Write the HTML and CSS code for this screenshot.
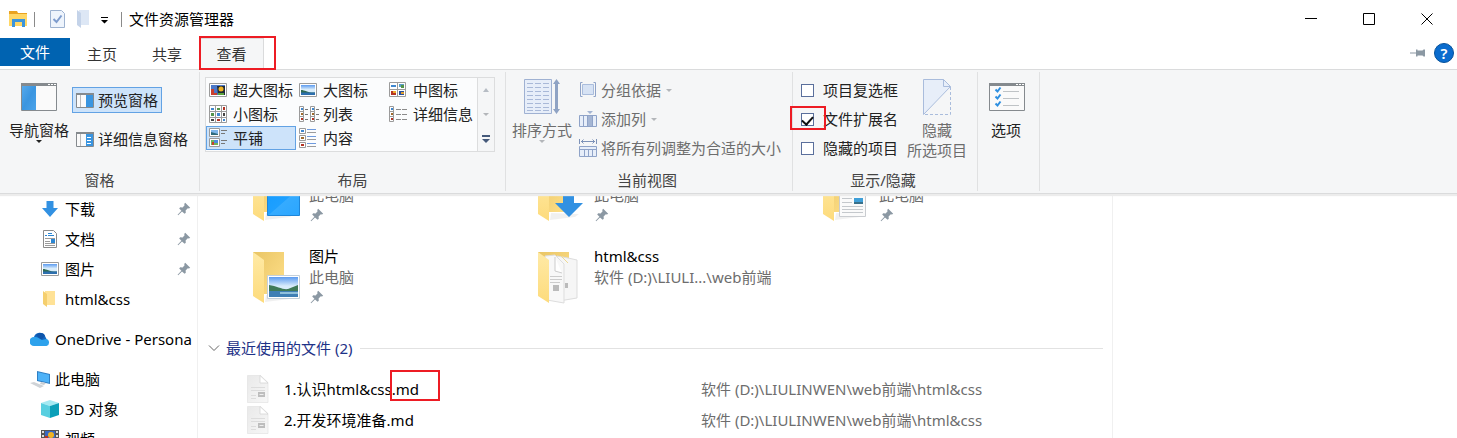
FILE: index.html
```html
<!DOCTYPE html>
<html lang="zh-CN">
<head>
<meta charset="utf-8">
<title>文件资源管理器</title>
<link rel="stylesheet" href="styles.css">
</head>
<body>
<svg class="defs" aria-hidden="true">
  <defs>
    <linearGradient id="gBlue" x1="0" y1="0" x2="1" y2="1"><stop offset="0" stop-color="#55a9ec"/><stop offset=".5" stop-color="#3a95e0"/><stop offset="1" stop-color="#4aa3ea"/></linearGradient>
    <linearGradient id="gBack" x1="0" y1="0" x2="1" y2="1"><stop offset="0" stop-color="#e9c565"/><stop offset="1" stop-color="#ffe08a"/></linearGradient>
    <linearGradient id="gFlap" x1="0" y1="0" x2="0" y2="1"><stop offset="0" stop-color="#ffeaa6"/><stop offset="1" stop-color="#fddb7c"/></linearGradient>
    <linearGradient id="gSky" x1="0" y1="0" x2="0" y2="1"><stop offset="0" stop-color="#5c9bf0"/><stop offset=".45" stop-color="#d8ecfb"/></linearGradient>
    <linearGradient id="gScreen" x1="0" y1="0" x2="1" y2="1"><stop offset="0" stop-color="#149bff"/><stop offset=".5" stop-color="#1ea0ff"/><stop offset=".52" stop-color="#35abff"/><stop offset="1" stop-color="#2ba6ff"/></linearGradient>
    <linearGradient id="gDoc" x1="0" y1="0" x2="1" y2="1"><stop offset="0" stop-color="#e9e9e9"/><stop offset="1" stop-color="#f7f7f7"/></linearGradient>
  </defs>
  <symbol id="pin" viewBox="0 0 14 14"><path fill="#8b98a3" d="M8.2.8 13.2 5.800 12 6.600 10.800 6.300 8.600 8.600 8.800 10.800 7.600 11.800 5 9.400 1.200 13.200.6 12.800 4.400 8.800 2.200 6.400 3.200 5.200 5.600 5.400 7.600 3.200 7.200 2z"/></symbol>
  <symbol id="folder" viewBox="0 0 50 54"><path fill="#000" opacity=".06" d="M14 44 42 45 38 48 13 51z"/><path fill="url(#gBack)" d="M1 1h31v42H1z"/><path fill="url(#gFlap)" d="M1 1 12 9v43L1 45z"/></symbol>
  <symbol id="photo" viewBox="0 0 18 14"><path fill="#fff" stroke="#9b9b9b" d="M.5.500h17v13H.5z"/><path fill="url(#gSky)" d="M2 2h14v10H2z"/><path fill="#2f6b54" d="M2 7c4 0 7 3 14 2.500V10H2z"/><path fill="#2d6fae" d="M2 9.500h14V12H2z"/></symbol>
  <symbol id="file" viewBox="0 0 22 28"><path fill="url(#gDoc)" stroke="#e2e2e2" stroke-width=".7" d="M.5.500h13l7.500 7v20H.5z"/><path fill="#fff" stroke="#d4d4d4" stroke-width=".8" d="M13 .5v7.500h8z"/><path stroke="#dcdcdc" d="M4 12.500h14M4 15.500h14M4 20.500h5M4 23.500h5"/><path fill="#bdbdbd" d="M11 17h7v5h-7z"/><path stroke="#eee" d="M12.500 19.500h4"/></symbol>
  <symbol id="arrow" viewBox="0 0 6 3"><path fill="currentColor" d="M0 0h6L3 3z"/></symbol>
</svg>

<header class="titlebar">
  <div class="quick">
    <svg width="19" height="18" viewBox="0 0 19 18"><path fill="#e9a320" d="M0 1h8l1 2h9v5H0z"/><path fill="#ffd766" d="M0 4h18v12H0z"/><path fill="#3c95dc" d="M3 9h13v8h-3v-5H6v5H3z"/></svg>
    <i class="bar"></i>
    <button class="plain" aria-label="属性"><svg width="15" height="18" viewBox="0 0 15 18"><path fill="#eef4fc" stroke="#9db2d0" d="M.5.500h11l3 3v14H.5z"/><path fill="none" stroke="#7e9ccd" stroke-width="2" d="M3.500 9 6.500 12 11.500 5.500"/></svg></button>
    <button class="plain" aria-label="新建文件夹"><svg width="14" height="18" viewBox="0 0 14 18"><path fill="#dde7f5" d="M2 0h10v15H2z"/><path fill="#c4d3e9" d="M0 0 4 3v15l-4-3z"/></svg></button>
    <button class="plain more" aria-label="自定义快速访问工具栏"><svg width="7" height="7" viewBox="0 0 7 7"><path d="M0 0h7v1H0zM0 3h7L3.500 6.500z"/></svg></button>
    <i class="bar"></i>
  </div>
  <h1>文件资源管理器</h1>
  <div class="controls">
    <button aria-label="最小化"><svg width="12" height="12"><path stroke="#000" d="M0 5.500h12"/></svg></button>
    <button aria-label="最大化"><svg width="12" height="12"><path fill="none" stroke="#000" d="M.5.500h11v11H.5z"/></svg></button>
    <button aria-label="关闭"><svg width="12" height="12"><path stroke="#000" d="M.5.500 11.500 11.500M11.500.500.500 11.500"/></svg></button>
  </div>
</header>

<nav class="tabs">
  <button class="tab file">文件</button>
  <button class="tab home">主页</button>
  <button class="tab share">共享</button>
  <div class="anchor"><button class="tab view">查看</button><div class="mark mark-tab"></div></div>
  <div class="tab-tools">
    <button class="plain" aria-label="固定功能区"><svg width="16" height="10" viewBox="0 0 16 10"><path fill="#8b98a3" d="M0 4.500h6V1.500h1.500v1h5l1-1H15v7h-1.500l-1-1h-5v1H6v-3H0z"/></svg></button>
    <button class="help" aria-label="帮助">?</button>
  </div>
</nav>

<section class="ribbon">
  <div class="group g-panes">
    <div class="tools">
      <button class="big"><svg width="36" height="28" viewBox="0 0 36 28"><path fill="#fafafa" stroke="#858a8e" d="M.5.500h35v27H.5z"/><path fill="#858a8e" d="M0 0h36v3H0z"/><path fill="#fff" d="M27 1h2v1h-2zM30 1h2v1h-2zM33 1h2v1h-2z"/><path fill="url(#gBlue)" d="M1 3h14v24H1z"/></svg><span>导航窗格</span><svg class="dd" width="6" height="3"><use href="#arrow"/></svg></button>
      <div class="stack two">
        <button class="small on"><svg width="18" height="15" viewBox="0 0 18 15"><path fill="#fafafa" stroke="#858a8e" d="M.5.500h17v14H.5z"/><path fill="#858a8e" d="M0 0h18v2H0z"/><path stroke="#bbb" d="M4.500 2v12"/><path fill="#3a95e0" d="M10 2h7v12h-7z"/></svg>预览窗格</button>
        <button class="small"><svg width="18" height="15" viewBox="0 0 18 15"><path fill="#fafafa" stroke="#858a8e" d="M.5.500h17v14H.5z"/><path fill="#858a8e" d="M0 0h18v2H0z"/><path stroke="#bbb" d="M4.500 2v12"/><path fill="#3a95e0" d="M10 2h7v12h-7z"/><path stroke="#fff" d="M11 5.500h4M11 8.500h4M11 11.500h4"/></svg>详细信息窗格</button>
      </div>
    </div>
    <h2>窗格</h2>
  </div>

  <div class="group g-layout">
    <div class="tools">
      <div class="gallery">
        <div class="cells">
          <button class="cell"><svg width="18" height="14" viewBox="0 0 18 14"><path fill="#fff" stroke="#9b9b9b" d="M.5.500h17v13H.5z"/><path fill="#4b78c8" d="M2 2h14v10H2z"/><path fill="#c83f2e" d="M2 6h3v4h3v2H2z"/><path fill="#1f2a36" d="M8 3h8v9H9z"/><circle cx="12" cy="6" r="2.500" fill="#f0b323"/><path fill="#59a33a" d="M9 10h6v2H9z"/></svg>超大图标</button>
          <button class="cell"><svg width="18" height="14"><use href="#photo"/></svg>大图标</button>
          <button class="cell"><svg width="18" height="16" viewBox="0 0 18 16"><path fill="#fff" stroke="#9b9b9b" d="M.5.500h16v14H.5zM8.500.500v14M.500 7.500h16"/><path fill="#3f87cf" d="M2 3h5v2H2z"/><path fill="#5d9fc7" d="M10 2h5v3h-5z"/><path fill="#53944a" d="M12 3h3v3h-3z"/><path fill="#b43324" d="M2 9h5v4H2z"/><path fill="#efae2f" d="M4 9h3v2H4z"/><path fill="#2a4f9c" d="M10 9h5v4h-5z"/><path fill="#e0a02e" d="M12 10h3v2h-3z"/></svg>中图标</button>
          <button class="cell"><svg width="18" height="18" viewBox="0 0 18 18"><path fill="#fff" stroke="#9b9b9b" d="M.5.500h17v17H.5zM6.500.500v17M12.500.500v17M.500 6.500h17M.500 12.500h17"/><path fill="#3f87cf" d="M2 3h3v2H2zM8 8h3v3H8zM14 14h2v2h-2z"/><path fill="#53944a" d="M8 3h3v2H8zM2 8h3v3H2z"/><path fill="#b43324" d="M14 2h2v3h-2zM8 14h3v2H8z"/><path fill="#444" d="M14 8h2v3h-2zM2 14h3v2H2z"/></svg>小图标</button>
          <button class="cell"><svg width="20" height="16" viewBox="0 0 20 16"><path fill="#fff" stroke="#9b9b9b" d="M.5.500h4v15h-4zM11.500.500h4v15h-4zM.500 5.500h4M.500 10.500h4M11.500 5.500h4M11.500 10.500h4"/><path stroke="#777" d="M6 3.500h3M6 8.500h3M6 13.500h3M17 3.500h3M17 8.500h3M17 13.500h3"/><path fill="#3f87cf" d="M2 2h2v2H2zM13 2h2v2h-2z"/><path fill="#a06a2a" d="M2 7h2v2H2zM13 7h2v2h-2z"/><path fill="#b43324" d="M2 12h2v2H2zM13 12h2v2h-2z"/></svg>列表</button>
          <button class="cell"><svg width="18" height="16" viewBox="0 0 18 16"><path fill="#fff" stroke="#9b9b9b" d="M.5.500h4v15h-4zM.500 5.500h4M.500 10.500h4"/><path stroke="#8b8b8b" d="M7 3.500h5M13 3.500h5M7 8.500h5M13 8.500h5M7 13.500h5M13 13.500h5"/><path fill="#3f87cf" d="M2 2h2v2H2z"/><path fill="#a06a2a" d="M2 7h2v2H2z"/><path fill="#b43324" d="M2 12h2v2H2z"/></svg>详细信息</button>
          <button class="cell on"><svg width="18" height="20" viewBox="0 0 18 20"><path fill="#fff" stroke="#9b9b9b" d="M.5.500h10v8H.5zM.500 10.500h10v8H.5z"/><path fill="#7fb6ea" d="M2 2h7v5H2z"/><path fill="#2f6b7c" d="M2 4l7 2v1H2z"/><path fill="#6fb35a" d="M2 12h7v5H2z"/><path fill="#4c8ce0" d="M5 12h4v3H5z"/><path fill="#c83f2e" d="M3 14h2v3H3z"/><path stroke="#777" d="M12 2.500h6M12 5.500h4M12 12.500h6M12 15.500h4"/></svg>平铺</button>
          <button class="cell"><svg width="18" height="20" viewBox="0 0 18 20"><path fill="#fff" stroke="#9b9b9b" d="M.5.500h6v5h-6zM.500 7.500h6v5h-6zM.500 14.500h6v5h-6z"/><path stroke="#6e9ade" d="M8 1.500h9M8 8.500h9M8 15.500h9"/><path stroke="#9b9b9b" d="M8 4.500h9M8 11.500h9M8 18.500h9"/><path fill="#3f87cf" d="M2 2h3v2H2z"/><path fill="#a06a2a" d="M2 9h3v2H2z"/><path fill="#b43324" d="M2 16h3v2H2z"/></svg>内容</button>
        </div>
        <div class="scroller">
          <button aria-label="上一行"><svg width="6" height="4"><path fill="#b6bcc4" d="M0 4h6L3 0z"/></svg></button>
          <button aria-label="下一行"><svg width="6" height="3" class="pale"><use href="#arrow"/></svg></button>
          <button aria-label="更多"><svg width="8" height="8"><path fill="#44597a" d="M0 0h8v2H0zM0 4h8L4 8z"/></svg></button>
        </div>
      </div>
    </div>
    <h2>布局</h2>
  </div>

  <div class="group g-view">
    <div class="tools">
      <button class="big dim tall"><svg width="36" height="36" viewBox="0 0 36 36"><path fill="#e7eef9" stroke="#9fb1d2" d="M.5.500h27v34H.5z"/><path stroke="#a9b9d8" stroke-dasharray="6 2" d="M3 4.500h22M3 8.500h22M3 12.500h22M3 16.500h22M3 20.500h22M3 24.500h22M3 28.500h22M3 31.500h22"/><path fill="#8fa3c4" d="M32.500 0 36 5h-2v25h2l-3.500 5L29 30h2V5h-2z"/></svg><span>排序方式</span><svg class="dd" width="6" height="3"><use href="#arrow"/></svg></button>
      <div class="stack three">
        <button class="small dim"><svg width="18" height="18" viewBox="0 0 18 18"><path fill="none" stroke="#8fa3c8" d="M3.500 1.500h-2v14h2M14.500 1.500h2v14h-2"/><path fill="#d6e2f4" stroke="#a9bcdc" d="M3.500 3.500h11v10h-11z"/></svg>分组依据<svg width="6" height="3" class="pale"><use href="#arrow"/></svg></button>
        <button class="small dim"><svg width="18" height="18" viewBox="0 0 18 18"><path fill="#e7eef9" stroke="#8fa3c8" d="M.5 5.500h17v11H.5zM4.500 5.500v11M8.500 5.500v11M13.500 5.500v11"/><path fill="#a4b5d3" d="M9 6h4v10H9zM8 1h6l-3 3z"/></svg>添加列<svg width="6" height="3" class="pale"><use href="#arrow"/></svg></button>
        <button class="small dim"><svg width="18" height="18" viewBox="0 0 18 18"><path fill="#e7eef9" stroke="#8fa3c8" d="M.5 7.500h17v10H.5zM.500 10.500h17M5.500 10.500v7M9.500 10.500v7M13.500 10.500v7"/><path fill="none" stroke="#7d92b8" d="M.5 0v5M17.500 0v5M2 2.500h14M4.500.500 2.500 2.500 4.500 4.500M13.500.500 15.500 2.500 13.500 4.500"/></svg>将所有列调整为合适的大小</button>
      </div>
    </div>
    <h2>当前视图</h2>
  </div>

  <div class="group g-show">
    <div class="tools">
      <div class="checks">
        <label><input type="checkbox">项目复选框</label>
        <label class="anchor"><input type="checkbox" checked>文件扩展名<span class="mark mark-check"></span></label>
        <label><input type="checkbox">隐藏的项目</label>
      </div>
      <button class="big dim tall"><svg width="28" height="36" viewBox="0 0 28 36"><path fill="#e7eef9" d="M.5.500h20l7 7L.5 35z"/><path fill="none" stroke="#a9bcdc" d="M.5 35.500V.500h20l7 7L.5 35.500M20.500.500v7h7"/><path fill="none" stroke="#a9bcdc" stroke-dasharray="3 2" d="M27.500 8v27.500H1"/></svg><span>隐藏<br>所选项目</span></button>
    </div>
    <h2>显示/隐藏</h2>
  </div>

  <div class="group g-options">
    <div class="tools">
      <button class="big"><svg width="36" height="28" viewBox="0 0 36 28"><path fill="#fafafa" stroke="#858a8e" d="M.5.500h35v27H.5z"/><path fill="#858a8e" d="M0 0h36v3H0z"/><path fill="#fff" d="M27 1h2v1h-2zM30 1h2v1h-2zM33 1h2v1h-2z"/><path fill="none" stroke="#2e8fe0" stroke-width="2" d="M6.500 6.500 8.500 8.500 11.500 4.500M6.500 13.500 8.500 15.500 11.500 11.500M6.500 20.500 8.500 22.500 11.500 18.500"/><path stroke="#bfc3c6" d="M14 8.500h16M14 15.500h16M14 22.500h16"/></svg><span>选项</span></button>
    </div>
  </div>
</section>

<div class="body">
  <aside class="sidebar">
    <a href="#downloads" class="node sub"><svg width="18" height="18" viewBox="0 0 18 18"><path fill="#3291e2" d="M5.500 1h7v7H17L9 17 1 8h4.500z"/></svg><span>下载</span><svg class="pin" width="14" height="14"><use href="#pin"/></svg></a>
    <a href="#documents" class="node sub"><svg width="18" height="18" viewBox="0 0 18 18"><path fill="#fff" stroke="#8b8b8b" d="M2.500.500h10l3 3v14h-13z"/><path stroke="#2b86d3" d="M4 5.500h2M7 3.500h4M7 5.500h6"/><path stroke="#9b9b9b" d="M4 8.500h10M4 11.500h5M4 13.500h10M4 15.500h10"/><path fill="#2b86d3" d="M10 9h4v4h-4z"/></svg><span>文档</span><svg class="pin" width="14" height="14"><use href="#pin"/></svg></a>
    <a href="#pictures" class="node sub"><svg width="18" height="14"><use href="#photo"/></svg><span>图片</span><svg class="pin" width="14" height="14"><use href="#pin"/></svg></a>
    <a href="#html" class="node sub"><svg width="18" height="18" viewBox="0 0 18 18"><path fill="#ffe296" d="M4 1h10v14H4z"/><path fill="#f5cf6e" d="M2 1 6 4v13l-4-3z"/></svg><span>html&amp;css</span></a>
    <a href="#onedrive" class="node top"><svg width="20" height="14" viewBox="0 0 20 14"><path fill="#1267c1" d="M4 5a6 6 0 0 1 11-1l2 4-6 3-8-3z"/><path fill="#0f55ab" d="M6 3a6 6 0 0 1 8-1l1 2-4 4z"/><path fill="#2da2ec" d="M4 14A4.500 4.500 0 0 1 4 5c3-.5 5 1 8 3l4-1a3.600 3.600 0 0 1 .5 7z"/></svg><span>OneDrive - Persona</span></a>
    <a href="#pc" class="node top"><svg width="20" height="18" viewBox="0 0 20 18"><path fill="#2f7fc4" d="M7 1 20 4v10L7 11z"/><path fill="#4db2f8" d="M8 2.300 19 4.800v7.900L8 10.200z"/><path fill="#c9ced3" d="M11 12 16 13 14 15 10 14z"/><path fill="#cfd3d7" d="M0 13 4 12l10 4-4 2z"/></svg><span>此电脑</span></a>
    <a href="#objects" class="node sub"><svg width="18" height="18" viewBox="0 0 18 18"><path fill="#a4e9f2" d="M9 0 18 3 9 6 0 3z"/><path fill="#58cfe0" d="M0 3 9 6v12l-9-3z"/><path fill="#0a9fb8" d="M18 3 9 6v12l9-3z"/></svg><span>3D 对象</span></a>
    <a href="#videos" class="node sub"><svg width="18" height="18" viewBox="0 0 18 18"><path fill="#555" d="M0 0h18v18H0z"/><path stroke="#ddd" stroke-width="2" stroke-dasharray="2 2" d="M2 1v17M16 1v17"/><path fill="#3769c4" d="M4 1h10v16H4z"/><circle cx="10" cy="5" r="3" fill="#f0b323"/><path fill="#b43324" d="M4 6h3v4H4z"/><path fill="#53944a" d="M7 8h6v6H7z"/></svg><span>视频</span></a>
  </aside>

  <main class="content">
    <div class="tiles">
      <a href="#desktop" class="tile partial"><svg width="50" height="54"><use href="#folder"/><path fill="url(#gScreen)" stroke="#1d86da" d="M15.500 18.500h32v28h-32z"/></svg><span class="info"><span>此电脑</span><svg width="14" height="14"><use href="#pin"/></svg></span></a>
      <a href="#downloads" class="tile partial"><svg width="50" height="54"><use href="#folder"/><path fill="#3291e2" d="M26 16h11v18h9L32 48 18 34h8z"/></svg><span class="info"><span>此电脑</span><svg width="14" height="14"><use href="#pin"/></svg></span></a>
      <a href="#documents" class="tile partial"><svg width="50" height="54"><use href="#folder"/><path fill="#fafafa" stroke="#c9ccd0" d="M17.500 16.500h26v31h-26z"/><path stroke="#58a8dc" d="M20 26.500h21"/><path stroke="#c4c8cc" d="M20 29.500h10M20 33.500h10M20 37.500h21M20 40.500h21M20 43.500h21"/><path fill="#3f9fd8" d="M32 29h9v6h-9z"/><path fill="#38708a" d="M32 33h9v2h-9z"/></svg><span class="info"><span>此电脑</span><svg width="14" height="14"><use href="#pin"/></svg></span></a>
      <a href="#pictures" class="tile"><svg width="50" height="54"><use href="#folder"/><path fill="#fff" stroke="#c4d0da" d="M15.500 24.500h32v23h-32z"/><path fill="url(#gSky)" d="M17 26h29v20H17z"/><path fill="#3f7a58" d="M17 34c8 1 14 5 19 4l10-4v6H17z"/><path fill="#3f7fb4" d="M17 40h29v6H17z"/><path fill="#8fc0dc" d="M28 41h18v2H28z"/></svg><span class="info"><b>图片</b><span>此电脑</span><svg width="14" height="14"><use href="#pin"/></svg></span></a>
      <a href="#html" class="tile"><svg width="50" height="54"><path fill="url(#gBack)" d="M1 1h31v40H1z"/><path fill="#f6f6f6" stroke="#ddd" d="M20 5 31 7 40 9v38l-18 3z"/><path fill="none" stroke="#eed991" d="M24 5 31 12"/><path fill="#f8f8f8" stroke="#ddd" d="M8 5 18 4 27 13v39L10 49z"/><path fill="#fff" stroke="#ccc" d="M18 6v14l7 2"/><path stroke="#ccc" d="M13 25.500h12M13 28.500h12M13 31.500h10"/><path fill="#bbb" d="M16 34h6v6h-6zM28 32h3v5h-3z"/><path fill="url(#gFlap)" d="M1 1 12 9v43L1 45z"/></svg><span class="info"><b>html&amp;css</b><span>软件 (D:)\LIULI...\web前端</span></span></a>
    </div>
    <div class="section">
      <svg width="12" height="8"><path fill="none" stroke="#666" d="M1 1.500 6 6.500 11 1.500"/></svg>
      <h3>最近使用的文件 (2)</h3>
      <i class="rule"></i>
    </div>
    <div class="files">
      <div class="row"><svg width="22" height="28"><use href="#file"/></svg><div class="anchor name"><a href="#f1">1.认识html&amp;css.md</a><div class="mark mark-ext"></div></div><span class="path">软件 (D:)\LIULINWEN\web前端\html&amp;css</span></div>
      <div class="row"><svg width="22" height="28"><use href="#file"/></svg><div class="name"><a href="#f2">2.开发环境准备.md</a></div><span class="path">软件 (D:)\LIULINWEN\web前端\html&amp;css</span></div>
    </div>
  </main>
</div>
</body>
</html>
```
FILE: styles.css
```css
* { box-sizing: border-box; }

body {
  margin: 0;
  height: 100vh;
  display: flex;
  flex-direction: column;
  overflow: hidden;
  background: #fff;
  color: #000;
  font: 15px/20px "Noto Sans", "Noto Sans CJK SC", sans-serif;
}

h1, h2, h3 { margin: 0; font-size: 15px; font-weight: 400; }
a { color: inherit; text-decoration: none; }
svg { display: block; flex: none; }
.defs { position: absolute; width: 0; height: 0; }

button {
  padding: 0;
  border: 0;
  background: none;
  color: inherit;
  font: inherit;
  white-space: nowrap;
}

.anchor { position: relative; }
.mark { position: absolute; border: 2px solid #ed1c24; pointer-events: none; z-index: 2; }
.mark-tab { left: -1px; top: -2px; width: 77px; height: 34px; }
.mark-check { left: -11px; top: -3px; width: 36px; height: 24px; }
.mark-ext { left: 106px; top: -9px; width: 50px; height: 31px; }

/* Title bar */
.titlebar { display: flex; align-items: center; height: 38px; flex: none; }
.quick { display: flex; align-items: center; padding-left: 9px; gap: 12px; }
.quick .bar { width: 1px; height: 15px; background: #8a8a8a; margin: 0 3px 0 -6px; }
.quick .more { padding: 3px 0 0; margin: 0 7px 0 -2px; }
.titlebar h1 { margin-left: 7px; }
.quick .bar:last-child { margin-right: 0; }
.controls { display: flex; margin-left: auto; padding-right: 1px; }
.controls button { display: flex; justify-content: center; align-items: center; width: 58px; height: 38px; }

/* Tabs */
.tabs { display: flex; height: 31px; flex: none; }
.tab { height: 31px; color: #333; }
.tab.file { width: 70px; height: 28px; background: #0063b1; color: #fff; }
.tab.home { width: 64px; }
.tab.share { width: 66px; }
.tab.view { width: 64px; background: #f5f6f7; border: solid #dadbdc; border-width: 1px 1px 0 0; }
.tab-tools { display: flex; align-items: center; gap: 8px; margin-left: auto; padding: 0 3px 2px 0; }
.help {
  width: 20px;
  height: 20px;
  border: 1px solid #07529b;
  border-radius: 50%;
  background: #0a6cce;
  color: #fff;
  font-weight: 600;
  line-height: 18px;
}

/* Ribbon */
.ribbon {
  display: flex;
  flex: none;
  padding: 2px 0;
  background: #f5f6f7;
  border: solid #dadbdc;
  border-width: 1px 0;
  box-shadow: 0 2px 1px #ececec;
  color: #222;
  position: relative;
  z-index: 1;
}
.group { display: flex; flex-direction: column; height: 119px; border-right: 1px solid #e0e1e2; }
.group h2 { margin-top: auto; padding: 0 4px 1px 0; text-align: center; color: #444; }
.tools { display: flex; height: 95px; }
.g-panes { width: 200px; }
.g-panes h2, .g-layout h2 { padding-right: 0; }
.g-layout { width: 306px; }
.g-view { width: 287px; }
.g-show { width: 185px; }
.g-options { width: 62px; }
.g-panes .tools { padding-left: 9px; }
.g-layout .tools { padding-left: 5px; }
.g-view .tools { padding-left: 6px; }
.g-show .tools { padding-left: 8px; }
.g-options .tools { padding-left: 11px; }

.big { display: flex; flex-direction: column; align-items: center; align-self: flex-start; width: 60px; padding-top: 11px; }
.big span { margin-top: 9px; }
.big.tall { padding-top: 7px; }
.big.tall span { margin-top: 5px; }
.g-options .big { width: 36px; }
.g-options .big span { margin-right: 2px; }
.dim { color: #6d6d6d; }
.dim .dd, .pale { color: #b3b6ba; }

.stack { display: flex; flex-direction: column; align-items: flex-start; }
.small { display: flex; align-items: center; gap: 4px; height: 26px; padding: 0 3px; border: 1px solid transparent; }
.small .pale { margin-left: 1px; }
.stack.two { gap: 13px; padding-top: 15px; margin-left: 3px; }
.stack.three { gap: 3px; padding-top: 5px; margin-left: 3px; }
.small.on, .cell.on { background: #cde3fa; border-color: #62a2e4; }

.gallery { display: flex; width: 290px; height: 75px; margin-top: 5px; border: 1px solid #dcddde; background: #fbfcfd; }
.cells { display: grid; grid-template-columns: repeat(3, 90px); grid-auto-rows: 24px; width: 271px; }
.cell {
  display: grid;
  grid-template-columns: 18px 1fr;
  align-items: center;
  gap: 6px;
  padding-left: 2px;
  border: 1px solid transparent;
  text-align: left;
}
.scroller { display: grid; flex: 1; grid-template-rows: 24px 24px 25px; border-left: 1px solid #dcddde; background: #f5f6f7; }
.scroller button { display: flex; align-items: center; justify-content: center; }

.checks { display: flex; flex-direction: column; gap: 9px; padding: 8px 0; width: 106px; }
.checks label { display: flex; align-items: center; gap: 9px; white-space: nowrap; }
.checks input {
  appearance: none;
  flex: none;
  width: 13px;
  height: 13px;
  margin: 0;
  border: 1px solid #5a6f9c;
  background: #fff;
  display: flex;
  justify-content: center;
}
.checks input:checked::before {
  content: "";
  width: 5px;
  height: 9px;
  border: solid #111;
  border-width: 0 2px 2px 0;
  transform: rotate(42deg);
}

/* Folder tree */
.body { display: flex; flex: 1; min-height: 0; overflow: hidden; }
.sidebar { flex: none; width: 198px; border-right: 1px solid #f0f0f0; overflow: hidden; }
.node { display: flex; align-items: center; height: 30px; gap: 6px; }
.node span { white-space: nowrap; }
.node.sub { padding-left: 41px; }
.node.top { padding-left: 30px; margin-top: 10px; gap: 5px; }
.node .pin { margin: 0 6px 0 auto; }

/* Content */
.content { width: 915px; flex: 0 1 auto; border-right: 1px solid #f0f0f0; overflow: hidden; }
.tiles { display: flex; flex-wrap: wrap; margin-top: -30px; padding-left: 54px; }
.tile { display: flex; gap: 7px; width: 285px; height: 82px; }
.tile > svg { margin-top: 5px; }
.info { display: flex; flex-direction: column; line-height: 21px; color: #6d6d6d; white-space: nowrap; }
.partial .info { padding-top: 21px; }
.info b { font-weight: 400; color: #000; }
.info svg { margin: 2px 0 0 1px; }
.section { display: flex; align-items: center; gap: 6px; margin-top: 10px; padding: 0 9px 0 10px; }
.section h3 { color: #1e3287; white-space: nowrap; }
.rule { flex: 1; height: 1px; margin-left: 2px; background: #e2e2e2; }
.files { padding: 15px 0 0 49px; }
.row { display: flex; align-items: center; height: 31px; white-space: nowrap; }
.row .name { width: 417px; margin-left: 15px; }
.path { color: #6d6d6d; }
```
